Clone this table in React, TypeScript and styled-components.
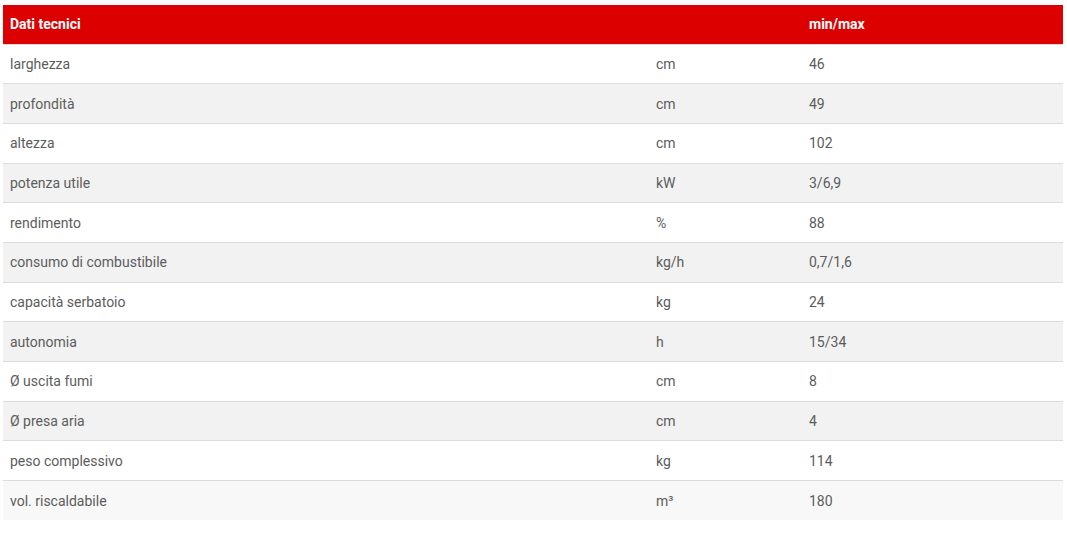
import styled, { createGlobalStyle } from "styled-components";

const GlobalStyle = createGlobalStyle`
  body {
    margin: 0;
    background: #ffffff;
    font-family: Roboto, "Liberation Sans", Arial, sans-serif;
  }
`;

const rows: [string, string, string][] = [
  ["larghezza", "cm", "46"],
  ["profondità", "cm", "49"],
  ["altezza", "cm", "102"],
  ["potenza utile", "kW", "3/6,9"],
  ["rendimento", "%", "88"],
  ["consumo di combustibile", "kg/h", "0,7/1,6"],
  ["capacità serbatoio", "kg", "24"],
  ["autonomia", "h", "15/34"],
  ["Ø uscita fumi", "cm", "8"],
  ["Ø presa aria", "cm", "4"],
  ["peso complessivo", "kg", "114"],
  ["vol. riscaldabile", "m³", "180"],
];

const App = () => {
  return (
    <>
      <GlobalStyle />
      <Wrapper>
        <Table>
          <colgroup>
            <col style={{ width: 646 }} />
            <col style={{ width: 153 }} />
            <col />
          </colgroup>
          <thead>
            <HeadRow>
              <HeadCell>Dati tecnici</HeadCell>
              <HeadCell></HeadCell>
              <HeadCell>min/max</HeadCell>
            </HeadRow>
          </thead>
          <tbody>
            {rows.map(([label, unit, value], i) => (
              <Row key={label} $even={i % 2 === 1} $last={i === rows.length - 1}>
                <Cell>{label}</Cell>
                <Cell>{unit}</Cell>
                <Cell>{value}</Cell>
              </Row>
            ))}
          </tbody>
        </Table>
      </Wrapper>
    </>
  );
};

export default App;

const Wrapper = styled.div`
  padding: 5px 4px 0 3px;
`;

const Table = styled.table`
  width: 1060px;
  border-collapse: collapse;
  table-layout: fixed;
`;

const HeadRow = styled.tr`
  height: 39px;
  background: #dd0000;
`;

const HeadCell = styled.th`
  padding: 0 7px;
  text-align: left;
  color: #ffffff;
  font-size: 14px;
  font-weight: 700;
`;

const Row = styled.tr<{ $even: boolean; $last: boolean }>`
  height: 39.7px;
  background: ${({ $even, $last }) => ($last ? "#f8f8f8" : $even ? "#f2f2f2" : "#ffffff")};
  border-top: 1px solid #dcdcdc;
`;

const Cell = styled.td`
  padding: 0 7px;
  color: #5c5c5c;
  font-size: 14px;
  vertical-align: middle;
`;
